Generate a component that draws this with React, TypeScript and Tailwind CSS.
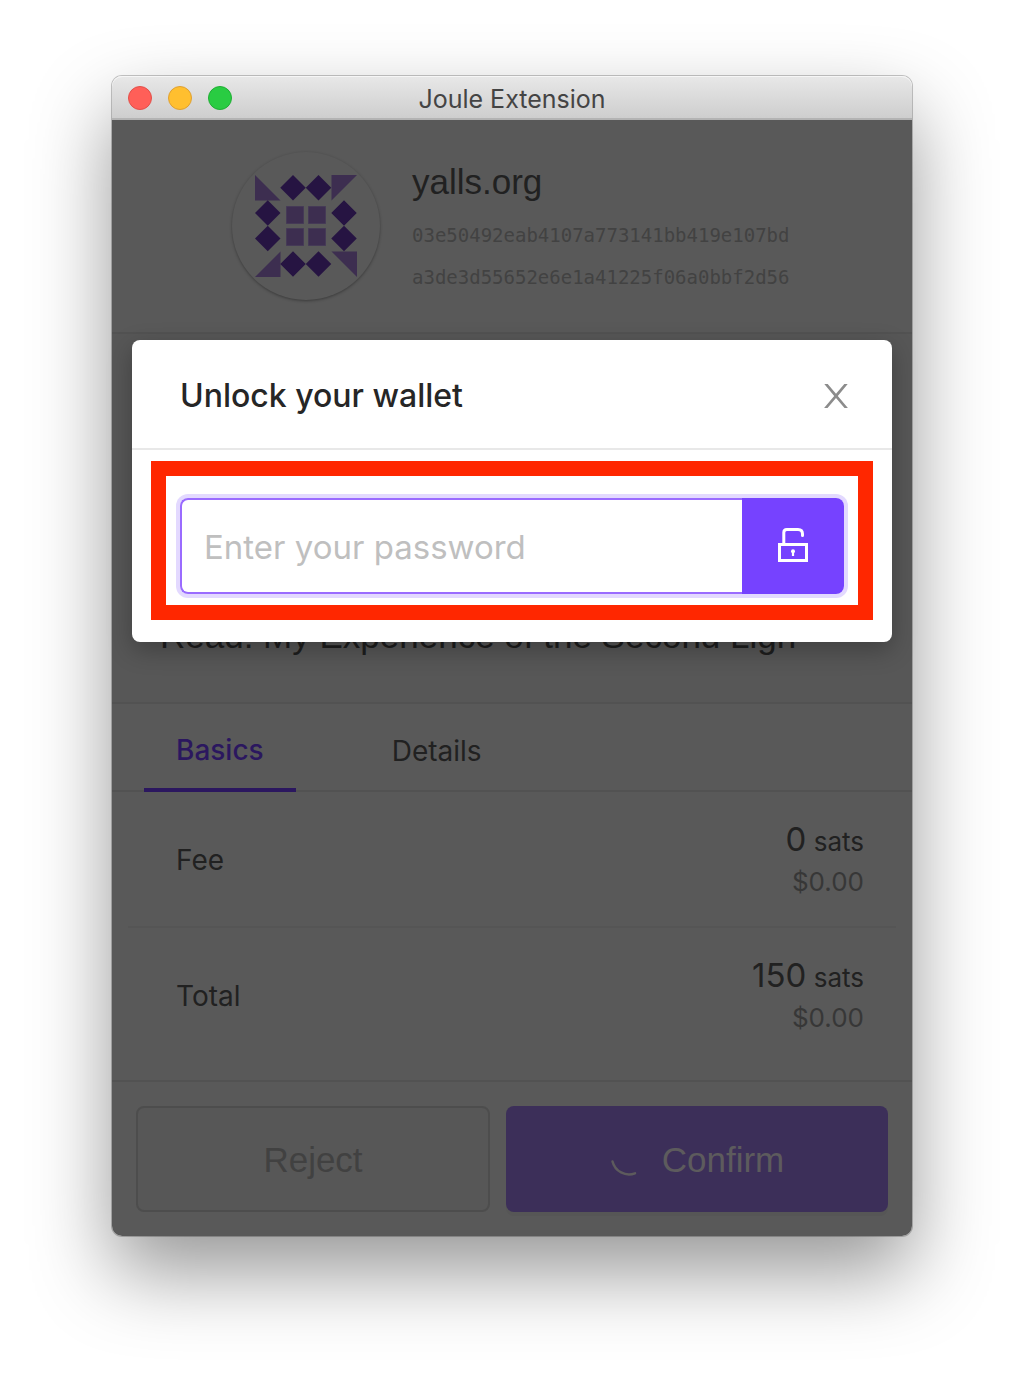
import React from "react";

const SANS = "font-['Inter','Liberation_Sans',sans-serif]";
const HELV = "font-['Liberation_Sans',sans-serif]";

function Identicon() {
  const diamonds = [
    [38, 12.75], [63.5, 12.75], [12.75, 38], [12.75, 63.5],
    [89, 38], [89, 63.5], [38, 89], [63.5, 89],
  ];
  return (
    <svg viewBox="0 0 102 102" className="h-[102px] w-[102px]" aria-hidden="true">
      <g fill="#3d2e50">
        <path d="M0 0L25.5 25.5H0Z" />
        <path d="M76.500 0H102L76.500 25.500Z" />
        <path d="M102 102L76.500 76.500H102Z" />
        <path d="M0 102L25.500 76.500V102Z" />
        <path d="M31.500 31.500h17v17h-17zM53.500 31.500h17v17h-17zM31.500 53.500h17v17h-17zM53.500 53.500h17v17h-17z" stroke="#453a56" strokeWidth="1" />
      </g>
      {diamonds.map(([x, y]) => (
        <path key={`${x}-${y}`} d={`M${x} ${y - 12.75}l12.75 12.75l-12.75 12.75l-12.75 -12.75z`} fill="#261442" />
      ))}
    </svg>
  );
}

function TitleBar() {
  return (
    <header className="relative flex h-11 items-center gap-4 rounded-t-[10px] border-b-2 border-[#b3b3b3] bg-linear-to-b from-[#e8e8e8] to-[#cecece] px-4 pt-0.5 shadow-[inset_0_1px_0_#f6f6f6]">
      <button type="button" aria-label="Close window" className="size-6 rounded-full border border-[#e2504a] bg-[#ff5f58]" />
      <button type="button" aria-label="Minimize window" className="size-6 rounded-full border border-[#dfa032] bg-[#ffbf2f]" />
      <button type="button" aria-label="Zoom window" className="size-6 rounded-full border border-[#1fae34] bg-[#29cc42]" />
      <h1 className={`${SANS} pointer-events-none absolute inset-x-0 pt-0.5 text-center text-[25px] leading-8 text-[#444444]`}>Joule Extension</h1>
    </header>
  );
}

function AmountRow({ label, amount, fiat }: { label: string; amount: string; fiat: string }) {
  return (
    <div className="flex h-[136px] items-center justify-between border-b-2 border-[#555555] pr-8 pl-12 last:border-transparent">
      <dt className="pt-0.5 text-[28px] leading-8 text-[#212121]">{label}</dt>
      <dd className="text-right">
        <div className="text-[26px] leading-[42px] text-[#212121]">
          <span className="text-[33px]">{amount}</span> sats
        </div>
        <div className="text-[26px] leading-[38px] text-[#373737]">{fiat}</div>
      </dd>
    </div>
  );
}

function UnlockModal() {
  return (
    <section
      role="dialog"
      aria-labelledby="unlock-title"
      className="absolute inset-x-5 top-[220px] rounded-lg bg-white shadow-[0_8px_24px_rgba(0,0,0,0.28)]"
    >
      <div className="flex h-[110px] items-center justify-between border-b-2 border-[#e8e8e8] pt-1 pr-11 pl-12">
        <h2 id="unlock-title" className={`${SANS} text-[32px] leading-10 font-medium text-[#262626]`}>Unlock your wallet</h2>
        <button type="button" aria-label="Close" className="text-[#8c8c8c]">
          <svg viewBox="0 0 24 24" className="size-6" fill="currentColor" aria-hidden="true">
            <path d="M0.300 0H3.700L12 9.700L20.300 0H23.700L13.800 11.900L23.900 24H20.500L12 14.100L3.500 24H0.100L10.200 11.900Z" />
          </svg>
        </button>
      </div>
      <form className="p-12" onSubmit={(e) => e.preventDefault()}>
        <div className="flex h-24 rounded-lg shadow-[0_0_0_4px_#e3d9ff]">
          <input
            type="password"
            aria-label="Password"
            placeholder="Enter your password"
            className={`${SANS} min-w-0 flex-1 rounded-l-lg border-2 border-r-0 border-[#9a6bff] bg-white px-[22px] pt-1 text-[33px] text-[#262626] outline-none placeholder:text-[#bfbfbf]`}
          />
          <button type="submit" aria-label="Unlock" className="flex w-[102px] items-center justify-center rounded-r-lg bg-[#7642ff] pb-0.5">
            <svg viewBox="0 0 32 36" className="h-9 w-8" fill="none" stroke="#ffffff" strokeWidth="3" aria-hidden="true">
              <path d="M2.500 17.500H29.500V33.500H2.500Z" />
              <path d="M6.800 17.500V5.500Q6.800 2.500 9.800 2.500H21Q25.500 2.500 25.500 7V8.500" strokeLinecap="round" />
              <circle cx="16" cy="24.300" r="2" fill="#ffffff" stroke="none" />
              <path d="M16 24.500V29" strokeWidth="2.200" />
            </svg>
          </button>
        </div>
      </form>
      <div aria-hidden="true" className="pointer-events-none absolute inset-x-[19px] top-[121px] bottom-[22px] border-[15px] border-[#ff2700]" />
    </section>
  );
}

export default function App() {
  return (
    <div className="min-h-screen overflow-hidden bg-white px-28 pt-[76px] pb-[148px]">
      <main className={`${SANS} rounded-[10px] shadow-[0_0_0_1px_rgba(0,0,0,0.22),0_36px_80px_rgba(0,0,0,0.41)]`}>
        <TitleBar />
        <div className="relative rounded-b-[10px] bg-[#595959]">
          <section className="flex h-[214px] justify-center gap-8 border-b-2 border-[#525252] pt-8">
            <div className="flex size-[148px] items-center justify-center rounded-full shadow-[0_1px_3px_rgba(0,0,0,0.35)]">
              <Identicon />
            </div>
            <div className="w-[380px]">
              <h2 className={`${HELV} pt-1.5 text-[35px] leading-[48px] text-[#212121]`}>yalls.org</h2>
              <p className="pt-2 font-['DejaVu_Sans_Mono',monospace] text-[19px] leading-[42px] text-[#424242]">
                03e50492eab4107a773141bb419e107bd
                <br />
                a3de3d55652e6e1a41225f06a0bbf2d56
              </p>
            </div>
          </section>

          <section className="flex h-[370px] items-end border-b-2 border-[#525252] bg-[#575757] px-12 pb-[42px]">
            <p className={`${HELV} overflow-hidden text-[35px] leading-[48px] whitespace-nowrap text-[#1e1e1e]`}>
              Read: My Experience of the Second Ligh
            </p>
          </section>

          <div role="tablist" className="flex h-[88px] gap-16 border-b-2 border-[#525252] px-8 text-[28px]">
            <button type="button" role="tab" aria-selected="true" className="-mb-0.5 border-b-4 border-[#2b175f] px-8 pt-2 font-medium text-[#2b175f]">Basics</button>
            <button type="button" role="tab" aria-selected="false" className="px-8 pt-2 text-[#212121]">Details</button>
          </div>

          <dl className="px-4 pb-4">
            <AmountRow label="Fee" amount="0" fiat="$0.00" />
            <AmountRow label="Total" amount="150" fiat="$0.00" />
          </dl>

          <footer className={`${HELV} grid grid-cols-[354fr_382fr] gap-4 border-t-2 border-[#525252] p-6 text-[35px]`}>
            <button type="button" className="h-[106px] rounded-lg border-2 border-[#4d4d4d] bg-[#575757] pt-0.5 text-[#414141]">Reject</button>
            <button type="button" className="flex h-[106px] items-center justify-center gap-6 rounded-lg bg-[#3c2f59] pt-0.5 text-[#5d5b5d] shadow-[0_4px_0_rgba(0,0,0,0.03)]">
              <svg viewBox="0 0 28 28" className="size-7 overflow-visible" fill="none" stroke="currentColor" strokeWidth="2.500" strokeLinecap="round" aria-hidden="true">
                <path d="M2.500 15.500A17 17 0 0 0 25 27.300" />
              </svg>
              Confirm
            </button>
          </footer>

          <UnlockModal />
        </div>
      </main>
    </div>
  );
}
